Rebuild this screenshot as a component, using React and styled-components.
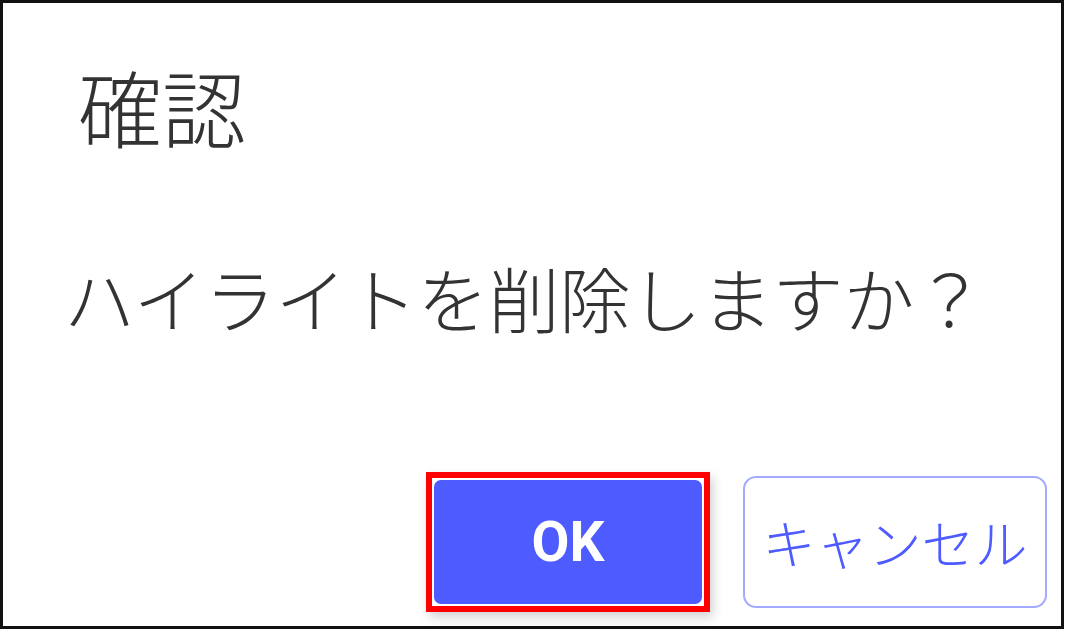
import React from 'react';
import styled, { createGlobalStyle } from 'styled-components';

const GlobalStyle = createGlobalStyle`
  html, body {
    margin: 0;
    padding: 0;
    background: #ffffff;
  }
  body {
    font-family: 'Noto Sans CJK JP', 'Noto Sans', sans-serif;
  }
`;

const Dialog = styled.div`
  box-sizing: border-box;
  width: 1064px;
  height: 629px;
  border: 3px solid #111111;
  background: #ffffff;
  display: flex;
  flex-direction: column;
  padding: 61px 14px 0 75px;
`;

const Title = styled.h1`
  margin: 0;
  font-size: 84px;
  line-height: 1;
  font-weight: 300;
  color: #333333;
`;

const Message = styled.p`
  margin: 113px 0 0 -14px;
  font-size: 71px;
  line-height: 1;
  font-weight: 300;
  color: #333333;
  white-space: nowrap;
`;

const Footer = styled.div`
  margin-top: auto;
  margin-bottom: 14px;
  display: flex;
  justify-content: flex-end;
  align-items: center;
  gap: 33px;
`;

const Highlight = styled.div`
  box-sizing: border-box;
  border: 6px solid #ff0000;
  padding: 2px;
  background: #ffffff;
  box-shadow: 3px 5px 10px rgba(0, 0, 0, 0.18);
  display: flex;
`;

const Button = styled.button`
  box-sizing: border-box;
  width: ${(p) => p.$w}px;
  height: ${(p) => p.$h}px;
  border-radius: ${(p) => (p.$primary ? 7 : 13)}px;
  border: ${(p) => (p.$primary ? 'none' : '2px solid #a3abff')};
  background: ${(p) => (p.$primary ? '#4d5bff' : '#ffffff')};
  color: ${(p) => (p.$primary ? '#ffffff' : '#4d5bff')};
  font-family: ${(p) => (p.$primary ? "Roboto, 'Noto Sans CJK JP', sans-serif" : "'Noto Sans CJK JP', sans-serif")};
  font-size: ${(p) => (p.$primary ? 55 : 53)}px;
  font-weight: ${(p) => (p.$primary ? 700 : 300)};
  display: flex;
  align-items: center;
  justify-content: center;
  padding: 0;
  cursor: pointer;
`;

export default function App() {
  return (
    <>
      <GlobalStyle />
      <Dialog>
        <Title>確認</Title>
        <Message>ハイライトを削除しますか？</Message>
        <Footer>
          <Highlight>
            <Button $primary $w={268} $h={124}>OK</Button>
          </Highlight>
          <Button $w={304} $h={132}>キャンセル</Button>
        </Footer>
      </Dialog>
    </>
  );
}
